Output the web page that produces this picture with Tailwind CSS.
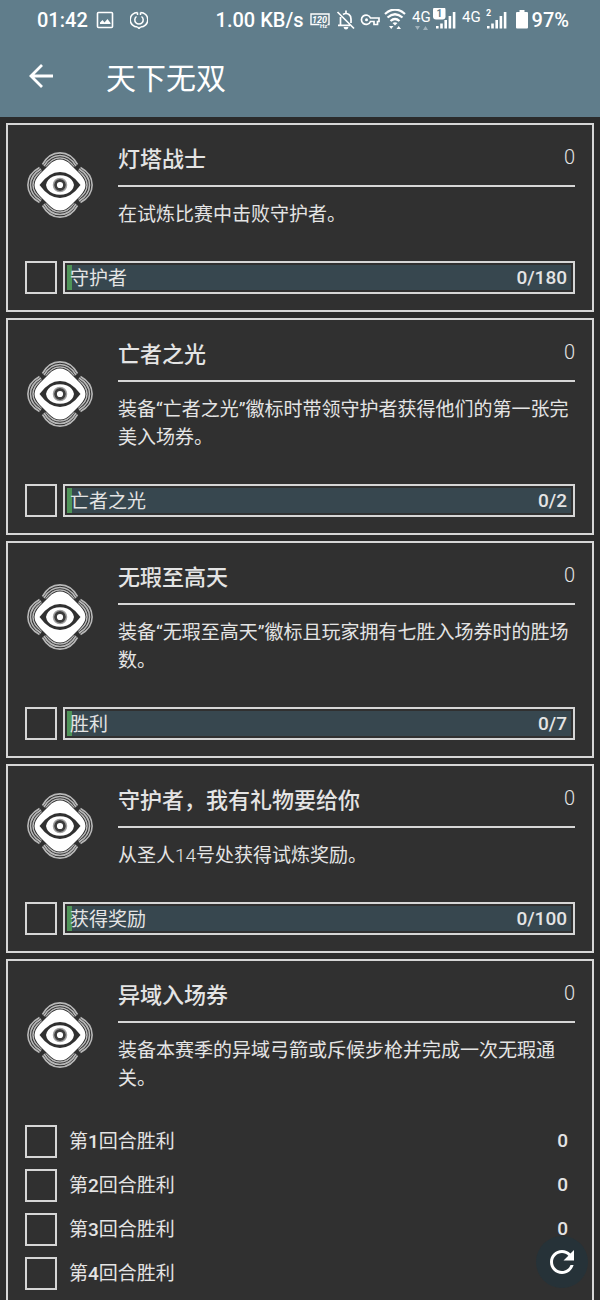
<!DOCTYPE html>
<html lang="zh-CN">
<head>
    <meta charset="UTF-8">
    <meta name="viewport" content="width=device-width, initial-scale=1.0">
    <title>天下无双</title>
    <script src="https://cdn.jsdelivr.net/npm/@tailwindcss/browser@4"></script>
</head>
<body class="h-screen flex flex-col bg-[#2b2b2b] text-[#e4e4e4] font-['Roboto','Noto_Sans_CJK_SC',sans-serif]">
    <!-- Emblem shared by every card -->
    <svg class="hidden" aria-hidden="true">
        <symbol id="emblem" viewBox="0 0 66 66">
            <g id="arc" fill="none" stroke="#b8b8b8">
                <path d="M15.500 12.500C24 -3 42 -3 50.500 12.500" stroke-width="1.600"/>
                <path d="M17 14C25 0 41 0 49 14" stroke-width="1.600"/>
                <path d="M19 15C27 3 39 3 47 15" stroke-width="1.600"/>
            </g>
            <use href="#arc" transform="rotate(90 33 33)"/>
            <use href="#arc" transform="rotate(180 33 33)"/>
            <use href="#arc" transform="rotate(270 33 33)"/>
            <path d="M33 7.500Q39 7.500 44 13L53 22Q58.500 28 58.500 33Q58.500 38 53 44L44 53Q39 58.500 33 58.500Q27 58.500 22 53L13 44Q7.500 38 7.500 33Q7.500 28 13 22L22 13Q27 7.500 33 7.500Z" fill="#fff" stroke="#303030" stroke-width="1.500" paint-order="stroke"/>
            <path d="M12.500 33Q22 20 33 20Q44 20 53.500 33Q44 46 33 46Q22 46 12.500 33Z" fill="#303030"/>
            <path d="M19 33Q20 27 26 24.500Q33 22 40 24.500Q46 27 47 33Q46 39 40 41.500Q33 44 26 41.500Q20 39 19 33Z" fill="#fff"/>
            <circle cx="33" cy="33" r="6.500" fill="none" stroke="#a0a0a0" stroke-width="1.500"/>
            <circle cx="33" cy="33" r="4.500" fill="none" stroke="#3c3c3c" stroke-width="2.800"/>
        </symbol>
    </svg>

    <header class="shrink-0 bg-[#607d8b] text-white">
        <!-- Status bar -->
        <div class="h-10 pl-[37px] pr-[31px] flex items-center justify-between text-xl font-medium">
            <div class="flex items-center">
                <span>01:42</span>
                <svg class="w-[18px] h-[18px] ml-2" viewBox="0 0 18 18" fill="none" stroke="#fff" stroke-width="1.6">
                    <rect x="1.500" y="1.500" width="15" height="15" rx="1"/>
                    <path d="M4 13V11.500L6.500 9L8.500 11.500L11.500 8L14.500 12V13Z" fill="#fff" stroke="none"/>
                </svg>
                <svg class="w-[18px] h-[18px] ml-4" viewBox="0 0 18 18" fill="none" stroke="#fff" stroke-width="1.500">
                    <path d="M7.500 1.400A7.300 7.300 0 0 0 7.500 16M10.500 1.400A7.300 7.300 0 0 1 10.500 16M7.500 1.400V4M10.500 1.400V4M7.500 16L9 17.500L10.500 16"/>
                    <path d="M6.500 5.500A4.200 4.200 0 1 0 11.500 5.500"/>
                </svg>
            </div>
            <div class="flex items-center">
                <span>1.00 KB/s</span>
                <svg class="w-5 h-4 ml-1.5" viewBox="0 0 20 16" fill="none" stroke="#fff" stroke-width="1.400">
                    <path d="M9.500 12.500H1V2H19V12.500H17.500"/>
                    <text x="2" y="10.500" font-size="9" font-style="italic" font-weight="700" fill="#fff" stroke="none">120</text>
                    <text x="10" y="15.500" font-size="6" font-weight="700" fill="#fff" stroke="none">Hz</text>
                </svg>
                <svg class="w-5 h-5 ml-1.5" viewBox="0 0 20 20" fill="none" stroke="#fff" stroke-width="1.700">
                    <path d="M1.500 2L18 18.500M4.500 7V14.500M2 15.300H14M7 4.500Q10 2.500 13 4.500Q15 6 15 9V13M10 0.500V3.500"/>
                    <path d="M7.500 17H12.500Q12 19.500 10 19.500Q8 19.500 7.500 17Z" fill="#fff" stroke="none"/>
                </svg>
                <svg class="w-5 h-4 ml-1" viewBox="0 0 20 16" fill="none" stroke="#fff" stroke-width="1.700">
                    <path d="M10.500 6H19V9.500H17.500V12.500H14V9.500H10.500A4.700 4.700 0 1 1 10.500 6Z"/>
                    <circle cx="6.500" cy="7.800" r="1.500" fill="#fff" stroke="none"/>
                </svg>
                <svg class="w-[22px] h-[22px] ml-1" viewBox="0 0 22 22" fill="none" stroke="#fff" stroke-width="2.200">
                    <path d="M1 5Q11 -4 21 5M3.500 8.500Q11 2 18.500 8.500M6.500 12Q11 8 15.500 12"/>
                    <path d="M8.500 14Q11 12.500 13.500 14L11 16.500ZM5 17H9.500L7.200 20ZM12.500 20H17L14.700 17Z" fill="#fff" stroke="none"/>
                </svg>
                <svg class="w-5 h-6 ml-1.5" viewBox="0 0 20 24" fill="#fff">
                    <text x="0" y="14" font-size="15" font-weight="400">4G</text>
                    <path d="M3 18H8L5.500 22ZM11 22H16L13.500 18Z" fill="#9fb1ba"/>
                </svg>
                <svg class="w-6 h-6" viewBox="0 0 24 24" fill="#fff">
                    <rect x="1" y="-1" width="12.500" height="12.500" rx="3"/>
                    <text x="4.500" y="9" font-size="10" font-weight="700" fill="#607d8b">1</text>
                    <path d="M4 18h2.600v2.500h-2.600zM8.200 15.500h2.600v5h-2.600zM12.400 12h2.600v8.500h-2.600zM16.600 8h2.600v12.500h-2.600zM20.800 4h2.600v16.500h-2.600z"/>
                </svg>
                <svg class="w-5 h-6 ml-1.5" viewBox="0 0 20 24" fill="#fff">
                    <text x="0" y="14" font-size="15" font-weight="400">4G</text>
                </svg>
                <svg class="w-6 h-6 ml-1" viewBox="0 0 24 24" fill="#fff">
                    <text x="0" y="7.500" font-size="9" font-weight="700">2</text>
                    <path d="M1 18h2.600v2.500h-2.600zM5.200 15.500h2.600v5h-2.600zM9.400 12h2.600v8.500h-2.600zM13.600 8h2.600v12.500h-2.600zM17.800 4h2.600v16.500h-2.600z"/>
                </svg>
                <svg class="w-3 h-5 ml-1.5" viewBox="0 0 12 20" fill="#fff">
                    <path d="M3.500 0H8.500V2H11Q12 2 12 3V17.500Q12 18.500 11 18.500H1Q0 18.500 0 17.500V3Q0 2 1 2H3.500Z"/>
                </svg>
                <span class="ml-1">97%</span>
            </div>
        </div>
        <!-- App bar -->
        <div class="h-[77px] pl-7 flex items-center">
            <button type="button" aria-label="返回" class="mb-1.5">
                <svg class="w-[26px] h-[26px]" viewBox="0 0 26 26" fill="none" stroke="#fff" stroke-width="2.800">
                    <path d="M25 13H4M14 2L3 13L14 24"/>
                </svg>
            </button>
            <h1 class="ml-[52px] text-[30px] leading-9 font-normal">天下无双</h1>
        </div>
    </header>

    <main class="grow min-h-0 overflow-y-auto [scrollbar-width:none] p-1.5 flex flex-col gap-1.5">
        <article class="shrink-0 border-2 border-[#d6d6d6] bg-[#303030]">
            <div class="flex items-center pl-[19px] pr-[17px]">
                <svg class="w-[66px] h-[66px] shrink-0"><use href="#emblem"/></svg>
                <div class="grow ml-[25px] pt-[18px] pb-[15px]">
                    <div class="flex justify-between pb-2 border-b-2 border-[#d6d6d6] leading-[34px]">
                        <h2 class="text-[22px] font-medium">灯塔战士</h2>
                        <span class="text-xl font-light">0</span>
                    </div>
                    <p class="mt-3.5 text-[19px] leading-7">在试炼比赛中击败守护者。</p>
                </div>
            </div>
            <div class="flex gap-1.5 px-[17px] pt-[17px] pb-4">
                <input id="guardian" type="checkbox" class="appearance-none w-8 h-[33px] shrink-0 border-2 border-[#d6d6d6]">
                <div class="grow h-[33px] p-0.5 border-2 border-[#d6d6d6]">
                    <div class="h-full flex items-center justify-between pr-1 bg-[#37474f] border-l-5 border-[#4f9458] text-[19px] leading-6">
                        <label for="guardian" class="-ml-0.5 pt-0.5">守护者</label>
                        <span class="font-medium">0/180</span>
                    </div>
                </div>
            </div>
        </article>

        <article class="shrink-0 border-2 border-[#d6d6d6] bg-[#303030]">
            <div class="flex items-center pl-[19px] pr-[17px]">
                <svg class="w-[66px] h-[66px] shrink-0"><use href="#emblem"/></svg>
                <div class="grow ml-[25px] pt-[18px] pb-[15px]">
                    <div class="flex justify-between pb-2 border-b-2 border-[#d6d6d6] leading-[34px]">
                        <h2 class="text-[22px] font-medium">亡者之光</h2>
                        <span class="text-xl font-light">0</span>
                    </div>
                    <p class="mt-3.5 text-[19px] leading-7">装备“亡者之光”徽标时带领守护者获得他们的第一张完美入场券。</p>
                </div>
            </div>
            <div class="flex gap-1.5 px-[17px] pt-[17px] pb-4">
                <input id="light" type="checkbox" class="appearance-none w-8 h-[33px] shrink-0 border-2 border-[#d6d6d6]">
                <div class="grow h-[33px] p-0.5 border-2 border-[#d6d6d6]">
                    <div class="h-full flex items-center justify-between pr-1 bg-[#37474f] border-l-5 border-[#4f9458] text-[19px] leading-6">
                        <label for="light" class="-ml-0.5 pt-0.5">亡者之光</label>
                        <span class="font-medium">0/2</span>
                    </div>
                </div>
            </div>
        </article>

        <article class="shrink-0 border-2 border-[#d6d6d6] bg-[#303030]">
            <div class="flex items-center pl-[19px] pr-[17px]">
                <svg class="w-[66px] h-[66px] shrink-0"><use href="#emblem"/></svg>
                <div class="grow ml-[25px] pt-[18px] pb-[15px]">
                    <div class="flex justify-between pb-2 border-b-2 border-[#d6d6d6] leading-[34px]">
                        <h2 class="text-[22px] font-medium">无瑕至高天</h2>
                        <span class="text-xl font-light">0</span>
                    </div>
                    <p class="mt-3.5 text-[19px] leading-7">装备“无瑕至高天”徽标且玩家拥有七胜入场券时的胜场数。</p>
                </div>
            </div>
            <div class="flex gap-1.5 px-[17px] pt-[17px] pb-4">
                <input id="wins" type="checkbox" class="appearance-none w-8 h-[33px] shrink-0 border-2 border-[#d6d6d6]">
                <div class="grow h-[33px] p-0.5 border-2 border-[#d6d6d6]">
                    <div class="h-full flex items-center justify-between pr-1 bg-[#37474f] border-l-5 border-[#4f9458] text-[19px] leading-6">
                        <label for="wins" class="-ml-0.5 pt-0.5">胜利</label>
                        <span class="font-medium">0/7</span>
                    </div>
                </div>
            </div>
        </article>

        <article class="shrink-0 border-2 border-[#d6d6d6] bg-[#303030]">
            <div class="flex items-center pl-[19px] pr-[17px]">
                <svg class="w-[66px] h-[66px] shrink-0"><use href="#emblem"/></svg>
                <div class="grow ml-[25px] pt-[18px] pb-[15px]">
                    <div class="flex justify-between pb-2 border-b-2 border-[#d6d6d6] leading-[34px]">
                        <h2 class="text-[22px] font-medium">守护者，我有礼物要给你</h2>
                        <span class="text-xl font-light">0</span>
                    </div>
                    <p class="mt-3.5 text-[19px] leading-7">从圣人<span class="font-light">14</span>号处获得试炼奖励。</p>
                </div>
            </div>
            <div class="flex gap-1.5 px-[17px] pt-[17px] pb-4">
                <input id="rewards" type="checkbox" class="appearance-none w-8 h-[33px] shrink-0 border-2 border-[#d6d6d6]">
                <div class="grow h-[33px] p-0.5 border-2 border-[#d6d6d6]">
                    <div class="h-full flex items-center justify-between pr-1 bg-[#37474f] border-l-5 border-[#4f9458] text-[19px] leading-6">
                        <label for="rewards" class="-ml-0.5 pt-0.5">获得奖励</label>
                        <span class="font-medium">0/100</span>
                    </div>
                </div>
            </div>
        </article>

        <article class="shrink-0 border-2 border-[#d6d6d6] bg-[#303030]">
            <div class="flex items-center pl-[19px] pr-[17px]">
                <svg class="w-[66px] h-[66px] shrink-0"><use href="#emblem"/></svg>
                <div class="grow ml-[25px] pt-[18px] pb-[15px]">
                    <div class="flex justify-between pb-2 border-b-2 border-[#d6d6d6] leading-[34px]">
                        <h2 class="text-[22px] font-medium">异域入场券</h2>
                        <span class="text-xl font-light">0</span>
                    </div>
                    <p class="mt-3.5 text-[19px] leading-7">装备本赛季的异域弓箭或斥候步枪并完成一次无瑕通关。</p>
                </div>
            </div>
            <!-- Rounds -->
            <ul class="flex flex-col gap-[11px] pl-[17px] pr-6 pt-[17px] pb-4 text-[19px]">
                <li class="flex items-center">
                    <input id="round1" type="checkbox" class="appearance-none w-8 h-[33px] shrink-0 border-2 border-[#d6d6d6]">
                    <label for="round1" class="grow ml-3 pt-0.5">第<span class="font-medium">1</span>回合胜利</label>
                    <span class="font-medium">0</span>
                </li>
                <li class="flex items-center">
                    <input id="round2" type="checkbox" class="appearance-none w-8 h-[33px] shrink-0 border-2 border-[#d6d6d6]">
                    <label for="round2" class="grow ml-3 pt-0.5">第<span class="font-medium">2</span>回合胜利</label>
                    <span class="font-medium">0</span>
                </li>
                <li class="flex items-center">
                    <input id="round3" type="checkbox" class="appearance-none w-8 h-[33px] shrink-0 border-2 border-[#d6d6d6]">
                    <label for="round3" class="grow ml-3 pt-0.5">第<span class="font-medium">3</span>回合胜利</label>
                    <span class="font-medium">0</span>
                </li>
                <li class="flex items-center">
                    <input id="round4" type="checkbox" class="appearance-none w-8 h-[33px] shrink-0 border-2 border-[#d6d6d6]">
                    <label for="round4" class="grow ml-3 pt-0.5">第<span class="font-medium">4</span>回合胜利</label>
                </li>
            </ul>
        </article>
    </main>

    <button type="button" aria-label="刷新" class="fixed right-3 bottom-3 w-[52px] h-[52px] rounded-full bg-[#263238] flex items-center justify-center">
        <svg class="w-9 h-9" viewBox="0 0 24 24" fill="#fff">
            <path d="M17.650 6.350C16.200 4.900 14.210 4 12 4c-4.420 0-7.990 3.580-7.990 8s3.570 8 7.990 8c3.730 0 6.840-2.550 7.730-6h-2.080c-.820 2.330-3.040 4-5.650 4-3.310 0-6-2.690-6-6s2.690-6 6-6c1.660 0 3.140.690 4.220 1.780L13 11h7V4l-2.350 2.350z"/>
        </svg>
    </button>
</body>
</html>
